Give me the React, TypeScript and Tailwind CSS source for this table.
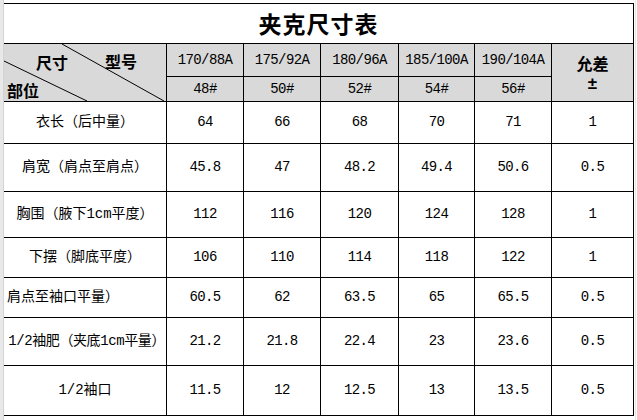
import React from "react";

const sizes = ["170/88A", "175/92A", "180/96A", "185/100A", "190/104A"];
const codes = ["48#", "50#", "52#", "54#", "56#"];

type Row = { label: string; align: "center" | "left" | "right"; vals: string[]; tol: string };
const rows: Row[] = [
  { label: "衣长（后中量）", align: "center", vals: ["64", "66", "68", "70", "71"], tol: "1" },
  { label: "肩宽（肩点至肩点）", align: "center", vals: ["45.8", "47", "48.2", "49.4", "50.6"], tol: "0.5" },
  { label: "胸围（腋下1cm平度）", align: "center", vals: ["112", "116", "120", "124", "128"], tol: "1" },
  { label: "下摆（脚底平度）", align: "center", vals: ["106", "110", "114", "118", "122"], tol: "1" },
  { label: "肩点至袖口平量）", align: "left", vals: ["60.5", "62", "63.5", "65", "65.5"], tol: "0.5" },
  { label: "1/2袖肥（夹底1cm平量）", align: "right", vals: ["21.2", "21.8", "22.4", "23", "23.6"], tol: "0.5" },
  { label: "1/2袖口", align: "center", vals: ["11.5", "12", "12.5", "13", "13.5"], tol: "0.5" },
];

const mono = "font-['Liberation_Mono','Noto_Sans_CJK_SC',monospace]";
const num = `${mono} text-[14px] tracking-[-0.6px]`;
const cell = "border-r border-b border-black flex items-center justify-center overflow-hidden";

export default function App() {
  return (
    <div className="w-[637px] h-[420px] bg-white flex overflow-hidden text-black">
      <div className="w-[3px] h-full bg-[#e8e8e8] border-r border-[#d4d4d4] box-content" />
      <div className="flex flex-col">
        <div className="h-[3px]" />
        <div className="grid grid-cols-[163px_77px_77px_78px_76px_77px_82px] grid-rows-[40px_33px_25px_42px_48px_46px_40px_40px_48px_50px] border-t border-black">
          <div className={`${cell} col-span-7 font-['Noto_Sans_CJK_SC',sans-serif] font-bold text-[23px] tracking-[1px]`}>
            夹克尺寸表
          </div>

          <div className="row-span-2 border-r border-b border-black bg-[#d9d9d9] relative font-['Noto_Sans_CJK_SC',sans-serif] font-bold text-[16px] leading-[16px]">
            <svg className="absolute inset-0" width="162" height="57" viewBox="0 0 162 57">
              <line x1="58" y1="0" x2="160" y2="57" stroke="#000" strokeWidth="1" />
              <line x1="0" y1="17" x2="83" y2="57" stroke="#000" strokeWidth="1" />
            </svg>
            <span className="absolute left-[32px] top-[10px]">尺寸</span>
            <span className="absolute left-[101px] top-[9px]">型号</span>
            <span className="absolute left-[3px] top-[38px]">部位</span>
          </div>
          {sizes.map((s) => (
            <div key={s} className={`${cell} bg-[#d9d9d9] ${num}`}>
              {s}
            </div>
          ))}
          <div className={`${cell} row-span-2 bg-[#d9d9d9] flex-col gap-[7px] font-bold`}>
            <span className="font-['Noto_Sans_CJK_SC',sans-serif] text-[16px] leading-[16px]">允差</span>
            <span className="font-['Liberation_Sans',sans-serif] text-[17px] leading-[12px]">±</span>
          </div>
          {codes.map((c) => (
            <div key={c} className={`${cell} bg-[#d9d9d9] ${num}`}>
              {c}
            </div>
          ))}

          {rows.map((r) => (
            <React.Fragment key={r.label}>
              <div
                className={`border-r border-b border-black flex items-center overflow-hidden whitespace-nowrap ${mono} text-[14px] ${
                  r.align === "center"
                    ? "justify-center"
                    : r.align === "left"
                    ? "justify-start pl-[3px]"
                    : "justify-end pr-[1px] tracking-[-0.4px]"
                }`}
              >
                {r.label}
              </div>
              {r.vals.map((v, i) => (
                <div key={i} className={`${cell} ${num}`}>
                  {v}
                </div>
              ))}
              <div className={`${cell} ${num}`}>{r.tol}</div>
            </React.Fragment>
          ))}
        </div>
      </div>
      <div className="flex-1 border-l border-[#e4e4e4] ml-[1px]" />
    </div>
  );
}
